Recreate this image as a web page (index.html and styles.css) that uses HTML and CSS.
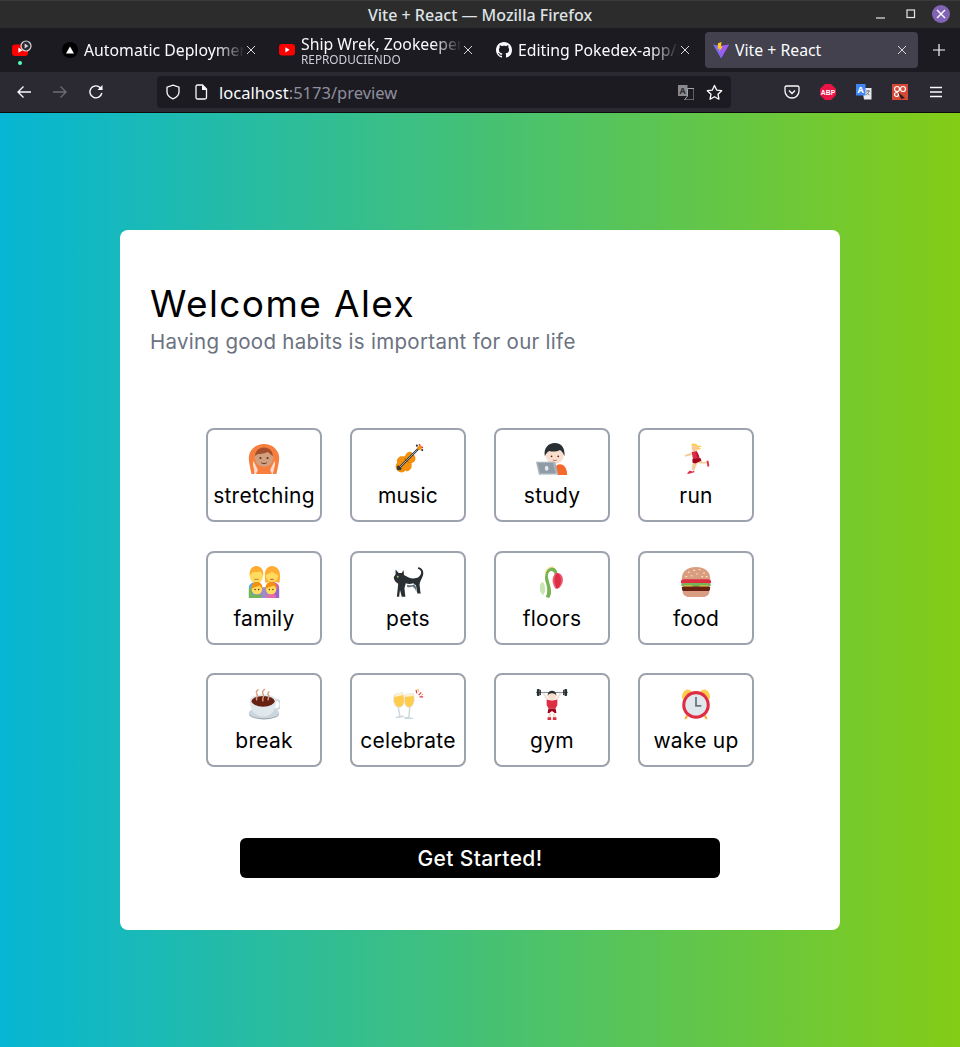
FILE: index.html
```html
<!DOCTYPE html>
<html lang="es">
<head>
<meta charset="utf-8">
<title>Vite + React</title>
<link rel="stylesheet" href="styles.css">
</head>
<body>
<div class="window">
  <header class="titlebar">
    <span class="title">Vite + React — Mozilla Firefox</span>
    <div class="winbtns">
      <svg class="wb wb-min" viewBox="0 0 12 12"><path d="M1 10h9" stroke="#e6e6e6" stroke-width="1.2"/></svg>
      <svg class="wb" viewBox="0 0 12 12"><rect x="2" y="2" width="7.5" height="7.5" fill="none" stroke="#e6e6e6" stroke-width="1.2"/></svg>
      <span class="closebtn"><svg viewBox="0 0 18 18" width="18" height="18"><path d="M5 5l8 8M13 5l-8 8" stroke="#fff" stroke-width="1.4"/></svg></span>
    </div>
  </header>

  <nav class="tabbar">
    <div class="pinned">
      <svg viewBox="0 0 16 16" width="16" height="16" class="pin-ico"><rect y="1.5" width="16" height="11.5" rx="3" fill="#f00"/><path d="M6.4 4.6l4.2 2.6-4.2 2.6z" fill="#fff"/></svg>
      <svg viewBox="0 0 12 12" width="12" height="12" class="pin-play"><circle cx="6" cy="6" r="5" fill="#2b2a33" stroke="#d5d5d8" stroke-width="1.2"/><path d="M4.6 3.4l3.8 2.6-3.8 2.6z" fill="#d5d5d8"/></svg>
      <span class="pin-dot"></span>
    </div>
    <div class="tab">
      <svg viewBox="0 0 16 16" width="16" height="16"><circle cx="8" cy="8" r="8" fill="#000"/><path d="M8 4.4l4 7H4z" fill="#fff"/></svg>
      <span class="tab-text"><span class="tab-name">Automatic Deployments</span></span>
      <svg class="x" viewBox="0 0 10 10"><path d="M1 1l8 8M9 1l-8 8" stroke="#d8d8dc" stroke-width="1"/></svg>
    </div>
    <div class="tab">
      <svg viewBox="0 0 16 16" width="16" height="16"><rect y="2" width="16" height="11.5" rx="3" fill="#f00"/><path d="M6.4 5.2l4.2 2.6-4.2 2.6z" fill="#fff"/></svg>
      <span class="tab-text two"><span class="tab-name">Ship Wrek, Zookeepers</span><span class="tab-sub">REPRODUCIENDO</span></span>
      <svg class="x" viewBox="0 0 10 10"><path d="M1 1l8 8M9 1l-8 8" stroke="#d8d8dc" stroke-width="1"/></svg>
    </div>
    <div class="tab">
      <svg viewBox="0 0 16 16" width="16" height="16"><path fill="#fbfbfe" fill-rule="evenodd" d="M8 0C3.58 0 0 3.58 0 8c0 3.54 2.29 6.53 5.47 7.59.4.07.55-.17.55-.38 0-.19-.01-.82-.01-1.49-2.01.37-2.53-.49-2.69-.94-.09-.23-.48-.94-.82-1.13-.28-.15-.68-.52-.01-.53.63-.01 1.08.58 1.23.82.72 1.21 1.87.87 2.33.66.07-.52.28-.87.51-1.07-1.78-.2-3.64-.89-3.64-3.95 0-.87.31-1.59.82-2.15-.08-.2-.36-1.02.08-2.12 0 0 .67-.21 2.2.82.64-.18 1.32-.27 2-.27s1.36.09 2 .27c1.53-1.04 2.2-.82 2.2-.82.44 1.1.16 1.92.08 2.12.51.56.82 1.27.82 2.15 0 3.07-1.87 3.75-3.65 3.95.29.25.54.73.54 1.48 0 1.07-.01 1.93-.01 2.2 0 .21.15.46.55.38A8.01 8.01 0 0 0 16 8c0-4.42-3.58-8-8-8z"/></svg>
      <span class="tab-text"><span class="tab-name">Editing Pokedex-app/F</span></span>
      <svg class="x" viewBox="0 0 10 10"><path d="M1 1l8 8M9 1l-8 8" stroke="#d8d8dc" stroke-width="1"/></svg>
    </div>
    <div class="tab active">
      <svg viewBox="0 0 16 16" width="16" height="16"><path d="M0 2.4l8 14 8-14-8 1.5z" fill="#7a6bf0"/><path d="M8 4v12.4L16 2.4z" fill="#a259f0"/><path d="M8.6 0L5 1.2 4.6 7l2-.4-.3 3 3.5-5.3-1.8.3z" fill="#ffc81f"/></svg>
      <span class="tab-text"><span class="tab-name">Vite + React</span></span>
      <svg class="x" viewBox="0 0 10 10"><path d="M1 1l8 8M9 1l-8 8" stroke="#d8d8dc" stroke-width="1"/></svg>
    </div>
    <svg class="plus" viewBox="0 0 12 12"><path d="M6 0v12M0 6h12" stroke="#fbfbfe" stroke-width="1.2"/></svg>
  </nav>

  <div class="toolbar">
    <div class="nav-btns">
      <svg viewBox="0 0 16 16"><path d="M15 8H2M7.500 2.500L2 8l5.500 5.500" fill="none" stroke="#fbfbfe" stroke-width="1.3"/></svg>
      <svg viewBox="0 0 16 16"><path d="M1 8h13M8.500 2.500L14 8l-5.500 5.500" fill="none" stroke="#6e6d75" stroke-width="1.3"/></svg>
      <svg viewBox="0 0 16 16"><path d="M13.800 9A6 6 0 1 1 12.300 3.800L14 5.500" fill="none" stroke="#fbfbfe" stroke-width="1.4"/><path d="M14.500 1v5h-5z" fill="#fbfbfe"/></svg>
    </div>
    <div class="urlbar">
      <svg viewBox="0 0 16 16" width="16" height="16"><path d="M8 1.200l6 2v4.500c0 3.500-2.500 5.800-6 7.100-3.500-1.300-6-3.600-6-7.100V3.200z" fill="none" stroke="#fbfbfe" stroke-width="1.300"/></svg>
      <svg class="doc" viewBox="0 0 16 16" width="16" height="16"><path d="M3 2.500A1.500 1.500 0 0 1 4.500 1H9.500L13.500 5V13.500A1.500 1.500 0 0 1 12 15H4.500A1.500 1.500 0 0 1 3 13.500z" fill="none" stroke="#fbfbfe" stroke-width="1.300"/><path d="M9 1v5h5z" fill="#fbfbfe"/></svg>
      <span class="url"><span class="host">localhost</span>:5173/preview</span>
      <svg class="trans" viewBox="0 0 16 16" width="16" height="16"><path d="M0 1h9.500v11H0z" fill="#8a8a8e"/><path d="M9.500 4.500H16V16H6.500L9.500 12z" fill="none" stroke="#a5a5a9" stroke-width="1"/><text x="4.700" y="9.500" class="trans-a">A</text></svg>
      <svg viewBox="0 0 18 18" width="17" height="17"><path d="M9 1.500l2.300 4.900 5.300.7-3.900 3.700 1 5.300L9 13.500l-4.700 2.600 1-5.300L1.400 7.100l5.300-.7z" fill="none" stroke="#fbfbfe" stroke-width="1.400" stroke-linejoin="round"/></svg>
    </div>
    <div class="ext-btns">
      <svg viewBox="0 0 16 16"><path d="M2.500 2h11A1.500 1.500 0 0 1 15 3.500V7a7 7 0 0 1-14 0V3.500A1.500 1.500 0 0 1 2.500 2z" fill="none" stroke="#fbfbfe" stroke-width="1.300"/><path d="M5 6.500l3 3 3-3" fill="none" stroke="#fbfbfe" stroke-width="1.400"/></svg>
      <svg viewBox="0 0 16 16"><path d="M5 0h6l5 5v6l-5 5H5l-5-5V5z" fill="#ea1546"/><text x="8" y="10.500" class="abp">ABP</text></svg>
      <svg viewBox="0 0 16 16"><path d="M6 4h9.500v11.500H8z" fill="#e8eaed"/><path d="M0 0h9.500v11.500H0z" fill="#4285f4"/><text x="4.700" y="9" class="trans-b">A</text><path d="M10 7h4M12 6v1M13 7c-.5 2-2 3.500-3 4M10.500 8.500c.8 1.200 2 2 3 2.500" stroke="#5f6368" fill="none" stroke-width=".8"/></svg>
      <svg viewBox="0 0 16 16"><rect width="16" height="16" fill="#d64937"/><circle cx="5" cy="5" r="2.500" fill="none" stroke="#fff" stroke-width="1.200"/><circle cx="11" cy="5" r="2.500" fill="none" stroke="#fff" stroke-width="1.200"/><circle cx="4.500" cy="10.500" r="2" fill="none" stroke="#fff" stroke-width="1.200"/><path d="M6 8l7 6-4 1-1-3z" fill="#222"/></svg>
      <svg viewBox="0 0 16 16"><path d="M2 3.500h12M2 8h12M2 12.500h12" stroke="#fbfbfe" stroke-width="1.300"/></svg>
    </div>
  </div>

  <main class="page">
    <section class="card">
      <h1 class="welcome">Welcome Alex</h1>
      <p class="subtitle">Having good habits is important for our life</p>

      <div class="habits">
        <button class="habit">
          <svg class="emoji" viewBox="0 0 36 36"><path d="M18 1C9 1 2 7 1 15c-.5 6 2 15 3 20h28c1-5 3.500-14 3-20C34 7 27 1 18 1z" fill="#f77e3c"/><path d="M7 30c-1-3-2-6-1-10l3 6 2 4-1 5H7zM29 30c1-3 2-6 1-10l-3 6-2 4 1 5h2z" fill="#fff" opacity=".75"/><circle cx="18" cy="16.500" r="10.500" fill="#d2a07e"/><path d="M8 15C8 9 12 5 18 5s10 4 10 10c-2-2-4-4-6-5-3 1.500-8 2.500-10 2.500-2 .5-3 1-4 2.500z" fill="#a5502c"/><circle cx="14" cy="17" r="1.200" fill="#60352a"/><circle cx="22" cy="17" r="1.200" fill="#60352a"/><path d="M15 22c2 1.500 4 1.500 6 0" fill="none" stroke="#60352a" stroke-width="1.200"/><path d="M9 35c1-3 4-6 9-6s8 3 9 6z" fill="#f77e3c"/></svg>
          <span class="habit-name">stretching</span>
        </button>
        <button class="habit">
          <svg class="emoji" viewBox="0 0 36 36"><path d="M24 12c-2-3-6-3-8 0-1 1-1 3-2 3-2 0-5-1-7 2-2 2-2 4-1 5-2 2-3 6 0 9s7 3 9 0c1 1 3 1 5-1 3-2 2-5 2-7 0-1 2-1 3-2 2-2 2-6-1-9z" fill="#f4900c"/><path d="M6 30L31 5" stroke="#31373d" stroke-width="2.500"/><path d="M9 27L28 8" stroke="#ccd6dd" stroke-width=".8"/><path d="M28 7c1-4 4-5 5-4s1 4-2 5z" fill="#f4900c"/><circle cx="28" cy="3" r="1.200" fill="#31373d"/><circle cx="34" cy="8" r="1.200" fill="#31373d"/><circle cx="31" cy="2" r="1" fill="#dd2e44"/><circle cx="34" cy="5" r="1" fill="#dd2e44"/><path d="M7 25l4 4-2 2-4-4z" fill="#31373d"/><path d="M15 17c-1 1 0 2 1 3M19 22l-2-2" stroke="#7c4a03" stroke-width=".8" fill="none"/></svg>
          <span class="habit-name">music</span>
        </button>
        <button class="habit">
          <svg class="emoji" viewBox="0 0 36 36"><path d="M20 36c0-7 2-12 7-12s8 5 8 12z" fill="#f4692c"/><circle cx="21" cy="13" r="10.500" fill="#f7dece"/><path d="M10 15C8 6 14 0 21 0c7 0 12 5 11 15-1-3-3-6-5-7-4 2-9 2-12 1-2 1-4 3-5 6z" fill="#292f33"/><circle cx="17.500" cy="15" r="1" fill="#662113"/><circle cx="25" cy="15" r="1" fill="#662113"/><path d="M19 19c1.500 1 3 1 4.500 0" stroke="#c1694f" stroke-width="1" fill="none"/><path d="M0 21h20a2 2 0 0 1 2 1.500l3 13.500H5a2 2 0 0 1-2-1.500z" fill="#a9b4bd"/><path d="M2 22.500h17l3 12H5z" fill="#8f9ca6"/><ellipse cx="12" cy="28.500" rx="2" ry="3" fill="#e1e8ed"/><path d="M5 34.500h19V36H5z" fill="#ccd6dd"/></svg>
          <span class="habit-name">study</span>
        </button>
        <button class="habit">
          <svg class="emoji" viewBox="0 0 36 36"><path d="M13 1c3-1 6 0 7 2 2 0 4 0 5 1-2 .5-3 1-4 1 1 1 2 1 3 1-3 2-6 2-7 1-2 0-4-2-4-6z" fill="#ffcc4d"/><circle cx="16.500" cy="6" r="3.500" fill="#f7cb99"/><path d="M12 11c-2 1-5 2-7 3l1 1.500c2-.5 5-1.500 7-2z" fill="#f7cb99"/><path d="M13 10l6-1 3 9-7 2z" fill="#dd2e44"/><path d="M15 19l8-1 2 3h6v2H22l-2-1-2 4-2 5-3-1 1-6z" fill="#f7cb99"/><path d="M14 18l9-1 1 3-7 3-3-1z" fill="#a0041e"/><path d="M19 10c2 2 3 5 3 8l-2 0c-1-3-2-5-3-6z" fill="#be1931"/><path d="M11 31l3 1 2-1 0 2-7 2-1-1z" fill="#dd2e44"/><path d="M30 20l2 0 1 6-2 1z" fill="#dd2e44"/></svg>
          <span class="habit-name">run</span>
        </button>
        <button class="habit">
          <svg class="emoji" viewBox="0 0 36 36"><path d="M1 36V24c0-3 3-6 8-6h1v18z" fill="#55acee"/><path d="M1 26l4-3v13H1z" fill="#77b255"/><path d="M35 36V24c0-3-3-6-8-6h-1v18z" fill="#d25ca5"/><path d="M35 26l-4-3v13h4z" fill="#9266cc"/><path d="M18 36V24h-8v12zM18 36V24h8v12z" fill="#9d8ac7"/><path d="M2 10C2 4 5 .5 9.500 .5S17 4 17 10s-3 9-7.500 9S2 16 2 10z" fill="#ffdc5d"/><path d="M2 11C1 4 5 0 9.500 0S18 4 17 11c-1-2-2-4-3-5-3 1-7 1-9 1-1 1-2 2-3 4z" fill="#ffac33"/><path d="M7 15h5" stroke="#c1694f" stroke-width="1"/><path d="M19 10c0-6 3-10 8-10s9 4 9 10c0 5 0 7-1 9l-3-1h-9l-3 1c-1-2-1-5-1-9z" fill="#ffac33"/><circle cx="27" cy="11" r="7" fill="#ffdc5d"/><path d="M20 10c3-1 6-2 7-4 1 2 4 3 7 4 0-5-3-8-7-8s-7 3-7 8z" fill="#ffac33"/><path d="M25 15h4" stroke="#dd2e44" stroke-width="1"/><circle cx="10" cy="26" r="6" fill="#ffdc5d"/><path d="M4 26c-1-5 2-8 6-8s7 3 6 8c-1-2-2-3-3-4-2 1-5 2-6 2-1 1-2 1-3 2z" fill="#f4900c"/><circle cx="8" cy="26.500" r=".8" fill="#662113"/><circle cx="12" cy="26.500" r=".8" fill="#662113"/><circle cx="26" cy="26" r="6" fill="#ffdc5d"/><path d="M20 26c-1-5 2-8 6-8s7 3 6 8c-1-2-2-3-3-4-2 1-5 2-6 2-1 1-2 1-3 2z" fill="#f4900c"/><circle cx="24" cy="26.500" r=".8" fill="#662113"/><circle cx="28" cy="26.500" r=".8" fill="#662113"/><path d="M5 33c1-1 3-1 5-1s4 0 5 1v3H5z" fill="#77b255"/><path d="M21 33c1-1 3-1 5-1s4 0 5 1v3H21z" fill="#e86aa6"/></svg>
          <span class="habit-name">family</span>
        </button>
        <button class="habit">
          <svg class="emoji" viewBox="0 0 36 36"><path d="M4 4l3.500 4h3.500L13 4.500l.5 5.500c3.500 2 7 4 10.500 4 5 0 7-2 8.500-5 1-3-.5-5-3.500-6l.5-1.500c4 .5 6.500 4 5.500 8.500-1 4-4 7-4 11l1 8.500 .5 1.500h-4l-1.500-9-3-2.500c-3 1-6 1-8.500 0L14 25l1 9.500h-4L9 27l-1 7.500H5.500L7 20C4 18.500 2 15.500 2 13c.5-2 2-3 2-4z" fill="#292f33"/><circle cx="6.500" cy="12" r="1" fill="#a6d388"/><path d="M17 21c3 1 6 1 8-.5l2 3 .5 6-1.500-3.500-3-3c-2 1-4 1-6 .5z" fill="#66757f"/></svg>
          <span class="habit-name">pets</span>
        </button>
        <button class="habit">
          <svg class="emoji" viewBox="0 0 36 36"><path d="M7 18c-3 2-3 8-2 11 1 2 2 3 3 4 2-3 3-6 2-9 0-3-1-5-3-6z" fill="#c6e5b3"/><path d="M11 35c2-4 2-9 1-13-1-4-3-8-1-14 1-4 5-7 9-6 2 1 4 3 4 6l-3 1c-1-3-3-4-5-3-3 2-3 5-2 9 1 5 3 9 3 14 0 3-1 5-2 7z" fill="#77b255"/><path d="M11 9c-1-4 3-8 8-8" stroke="#ffcc4d" stroke-width="1" fill="none"/><path d="M22 8c-2 2-4 6-3 11 1 3 2 6 4 7 1-2 2-2 3-1 3-3 5-7 4-12-1-4-4-6-8-5z" fill="#ea596e"/><path d="M24 8c2 1 4 4 4 8s-2 8-4 10c-2-3-3-6-3-10s1-6 3-8z" fill="#dd2e44"/></svg>
          <span class="habit-name">floors</span>
        </button>
        <button class="habit">
          <svg class="emoji" viewBox="0 0 36 36"><path d="M18 1C7 1 2 7 2 14c0 2 2 2 3 2h26c1 0 3 0 3-2 0-7-5-13-16-13z" fill="#d99e82"/><path d="M1 18c0-2 1-3 3-3h28c2 0 3 1 3 3s-1 2-3 2H4c-2 0-3 0-3-2z" fill="#dd2e44"/><path d="M1 22c0-2 3-3 5-3h24c2 0 5 1 5 3l-5 2-4 2-4-2-5 2-5-1z" fill="#77b255"/><path d="M4 23c0-1 2-1 3-1h6l5 3 5-3h6c1 0 3 0 3 1l-4 3 3 1v1H3v-2z" fill="#ffcc4d"/><path d="M2 24c0-1 2-1 2-1h28s2 0 2 1c0 3-1 5-3 5H5c-2 0-3-2-3-5z" fill="#662113"/><path d="M3 28h30v1c0 3-3 6-7 6H10c-4 0-7-3-7-6z" fill="#d99e82"/><g fill="#ffe8b6"><ellipse cx="10" cy="7" rx="1.200" ry=".7"/><ellipse cx="16" cy="5" rx="1.200" ry=".7"/><ellipse cx="22" cy="4" rx="1.200" ry=".7"/><ellipse cx="27" cy="8" rx="1.200" ry=".7"/><ellipse cx="19" cy="9" rx="1.200" ry=".7"/><ellipse cx="7" cy="12" rx="1.200" ry=".7"/><ellipse cx="13" cy="11" rx="1.200" ry=".7"/><ellipse cx="25" cy="12" rx="1.200" ry=".7"/><ellipse cx="30" cy="12" rx="1.200" ry=".7"/></g></svg>
          <span class="habit-name">food</span>
        </button>
        <button class="habit">
          <svg class="emoji" viewBox="0 0 36 36"><ellipse cx="18" cy="29" rx="17" ry="6.500" fill="#99aab5"/><ellipse cx="18" cy="28" rx="17" ry="6" fill="#ccd6dd"/><path d="M28 13h3a5 5 0 0 1 0 11h-3" fill="none" stroke="#ccd6dd" stroke-width="2.500"/><path d="M2 14c0 9 5 18 15 18s15-9 15-18z" fill="#e1e8ed"/><ellipse cx="17" cy="14" rx="15" ry="7" fill="#e1e8ed"/><ellipse cx="17" cy="15" rx="13" ry="6" fill="#662113"/><path d="M10 14c-2-3 2-4 0-7s1-5 2-5M17 15c-2-3 2-5 0-8s1-5 2-6M23 14c-2-3 2-3 0-6s1-4 1-4" fill="none" stroke="#d99e82" stroke-width="1.600"/></svg>
          <span class="habit-name">break</span>
        </button>
        <button class="habit">
          <svg class="emoji" viewBox="0 0 36 36"><path d="M3 7l9-2c2 5 3 11 0 15-1 1-3 2-5 2-3-1-4-3-5-6-.5-3 0-6 1-9z" fill="#ffcc4d" stroke="#e1e8ed" stroke-width="1"/><path d="M3 7l9-2 .5 3-9 2z" fill="#fff" opacity=".7"/><path d="M7 22l2 10" stroke="#ccd6dd" stroke-width="1.600"/><path d="M4 33c2-1 6-2 9-2l1 1c-3 1-7 2-10 2z" fill="#ccd6dd"/><path d="M15 7l9-1c1 3 1 6 1 9-1 3-2 6-5 7-2 0-4-1-5-3-2-4-1-8 0-12z" fill="#ffcc4d" stroke="#e1e8ed" stroke-width="1"/><path d="M15 7l9-1v3l-9 1z" fill="#fff" opacity=".7"/><path d="M20 22l-1 11" stroke="#ccd6dd" stroke-width="1.600"/><path d="M14 33c3-1 7 0 10 1v1H14z" fill="#ccd6dd"/><path d="M27 2l1 4M33 5l-3 3M35 10l-4 0" stroke="#dd2e44" stroke-width="1.200"/><path d="M29 1l1 3M35 7l-2 1" stroke="#f4900c" stroke-width="1"/></svg>
          <span class="habit-name">celebrate</span>
        </button>
        <button class="habit">
          <svg class="emoji" viewBox="0 0 36 36"><path d="M0 5h36" stroke="#66757f" stroke-width="1"/><rect x="1" y="1" width="3" height="8" rx="1" fill="#292f33"/><rect x="4" y="2" width="1.500" height="6" fill="#292f33"/><rect x="32" y="1" width="3" height="8" rx="1" fill="#292f33"/><rect x="30.500" y="2" width="1.500" height="6" fill="#292f33"/><path d="M9 5l5 8h-2L7 6zM27 5l-5 8h2l5-7z" fill="#f7dece"/><circle cx="18" cy="9" r="4.500" fill="#f7dece"/><path d="M13 9c0-4 2-6 5-6s5 2 5 6c-1-2-2-3-5-3s-4 1-5 3z" fill="#292f33"/><path d="M12 13l5 1h2l5-1v6l-2 4H14l-2-4z" fill="#dd2e44"/><path d="M14 23h8l1 5-2 0-3-2-3 2-2 0z" fill="#a0041e"/><path d="M14 28h3v5h-3zM19 28h3v5h-3z" fill="#f7dece"/><path d="M13 33h4v3h-4zM19 33h4v3h-4z" fill="#dd2e44"/></svg>
          <span class="habit-name">gym</span>
        </button>
        <button class="habit">
          <svg class="emoji" viewBox="0 0 36 36"><path d="M3 13C1 9 3 4 7 2c2-1 5 0 6 2z" fill="#ffcc4d"/><path d="M33 13c2-4 0-9-4-11-2-1-5 0-6 2z" fill="#ffcc4d"/><path d="M8 31l-2 4M28 31l2 4" stroke="#ffac33" stroke-width="2.400"/><circle cx="18" cy="19" r="15.500" fill="#dd2e44"/><circle cx="18" cy="19" r="12" fill="#e1e8ed"/><path d="M18 10v10h6" fill="none" stroke="#66757f" stroke-width="2"/></svg>
          <span class="habit-name">wake up</span>
        </button>
      </div>

      <div class="actions">
        <button class="start">Get Started!</button>
      </div>
    </section>
  </main>
</div>
</body>
</html>
```

FILE: styles.css
```css
* { box-sizing: border-box; }
html, body { margin: 0; padding: 0; height: 100%; }
body { font-family: "Inter", "Noto Sans", sans-serif; overflow: hidden; }

.window { display: flex; flex-direction: column; height: 100vh; }

.titlebar {
  height: 28px;
  flex: none;
  display: flex;
  align-items: center;
  justify-content: center;
  background: #2c2c2c;
  border-top: 1px solid #3a3a3a;
  position: relative;
  color: #dfe3e6;
  font: 500 16px "Noto Sans", sans-serif;
}
.winbtns {
  position: absolute;
  right: 10px;
  top: 4px;
  display: flex;
  align-items: center;
  gap: 15px;
}
.wb { width: 12px; height: 12px; }
.wb-min { margin-right: 3px; }
.closebtn {
  width: 18px;
  height: 18px;
  border-radius: 50%;
  background: #8163b5;
  display: flex;
}

.tabbar {
  height: 44px;
  flex: none;
  display: flex;
  align-items: center;
  gap: 4px;
  background: #1c1b22;
  color: #fbfbfe;
  padding-left: 54px;
  position: relative;
  font: 400 15.8px "Noto Sans", sans-serif;
}
.pinned { position: absolute; left: 12px; top: 0; width: 30px; height: 44px; }
.pin-ico { position: absolute; left: 0; top: 15px; }
.pin-play { position: absolute; left: 8px; top: 12px; }
.pin-dot { position: absolute; left: 6px; top: 33px; width: 4px; height: 4px; border-radius: 50%; background: #54ffbd; }

.tab {
  width: 213px;
  height: 36px;
  padding: 0 8px;
  display: flex;
  align-items: center;
  gap: 6px;
  border-radius: 4px;
  flex: none;
}
.tab.active { background: #42414d; }
.tab-text {
  flex: 1;
  min-width: 0;
  margin-right: -5px;
  display: flex;
  flex-direction: column;
  overflow: hidden;
  white-space: nowrap;
  -webkit-mask-image: linear-gradient(to right, #000 82%, transparent 100%);
  mask-image: linear-gradient(to right, #000 82%, transparent 100%);
}
.tab-name { line-height: 20px; }
.tab-text.two .tab-name { line-height: 18px; }
.tab-sub { font-size: 11.8px; line-height: 13px; color: #cfcfd8; }
.active .tab-text { -webkit-mask-image: none; mask-image: none; }
.x { width: 10px; height: 10px; flex: none; margin-right: 3px; }
.plus { width: 12px; height: 12px; margin-left: 11px; flex: none; }

.toolbar {
  height: 41px;
  flex: none;
  display: flex;
  align-items: center;
  background: #2b2a33;
  border-bottom: 1px solid #0c0c0d;
  padding: 0 16px;
}
.nav-btns, .ext-btns { display: flex; align-items: center; gap: 20px; }
.nav-btns svg, .ext-btns svg { width: 16px; height: 16px; flex: none; }
.nav-btns { width: 141px; }
.urlbar {
  width: 574px;
  height: 32px;
  background: #1c1b22;
  border-radius: 4px;
  display: flex;
  align-items: center;
  padding: 0 8px;
  gap: 12px;
  color: #fbfbfe;
  font: 400 16.5px "Noto Sans", sans-serif;
}
.doc { flex: none; }
.url { flex: 1; color: #8f8f9d; margin-left: -2px; }
.host { color: #fbfbfe; }
.trans-a { font: 700 9px "Noto Sans", sans-serif; fill: #2b2a33; text-anchor: middle; }
.trans-b { font: 700 9px "Noto Sans", sans-serif; fill: #fff; text-anchor: middle; }
.abp { font: 700 6.800px "Liberation Sans", sans-serif; fill: #fff; text-anchor: middle; }
.ext-btns { margin-left: 53px; }

.page {
  flex: 1;
  min-height: 0;
  display: flex;
  align-items: center;
  justify-content: center;
  background: linear-gradient(to right, #06b6d4, #84cc16);
}
.card {
  width: 720px;
  height: 700px;
  background: #fff;
  border-radius: 8px;
  padding: 52px 30px 0;
}
.welcome {
  margin: 0;
  font-size: 37px;
  font-weight: 400;
  line-height: 44px;
  letter-spacing: 1.4px;
  color: #000;
}
.subtitle {
  margin: 2px 0 0;
  font-size: 20.5px;
  line-height: 28px;
  letter-spacing: .29px;
  color: #6b7280;
}
.habits {
  margin-top: 72px;
  display: grid;
  grid-template-columns: repeat(4, 116px);
  grid-auto-rows: 94px;
  gap: 28.5px 28px;
  justify-content: center;
}
.habit {
  display: flex;
  flex-direction: column;
  align-items: center;
  justify-content: flex-start;
  padding: 13px 0 0;
  background: #fff;
  border: 2px solid #9ca3af;
  border-radius: 8px;
  font-family: inherit;
  color: #000;
}
.emoji { width: 32px; height: 32px; display: block; }
.habit-name { font-size: 21px; line-height: 28px; margin-top: 7px; letter-spacing: .25px; }
.actions { margin-top: 71px; display: flex; justify-content: center; }
.start {
  width: 480px;
  height: 40px;
  border: 0;
  border-radius: 6px;
  background: #000;
  color: #fff;
  font: 500 21px "Inter", sans-serif;
  letter-spacing: .35px;
}
```
